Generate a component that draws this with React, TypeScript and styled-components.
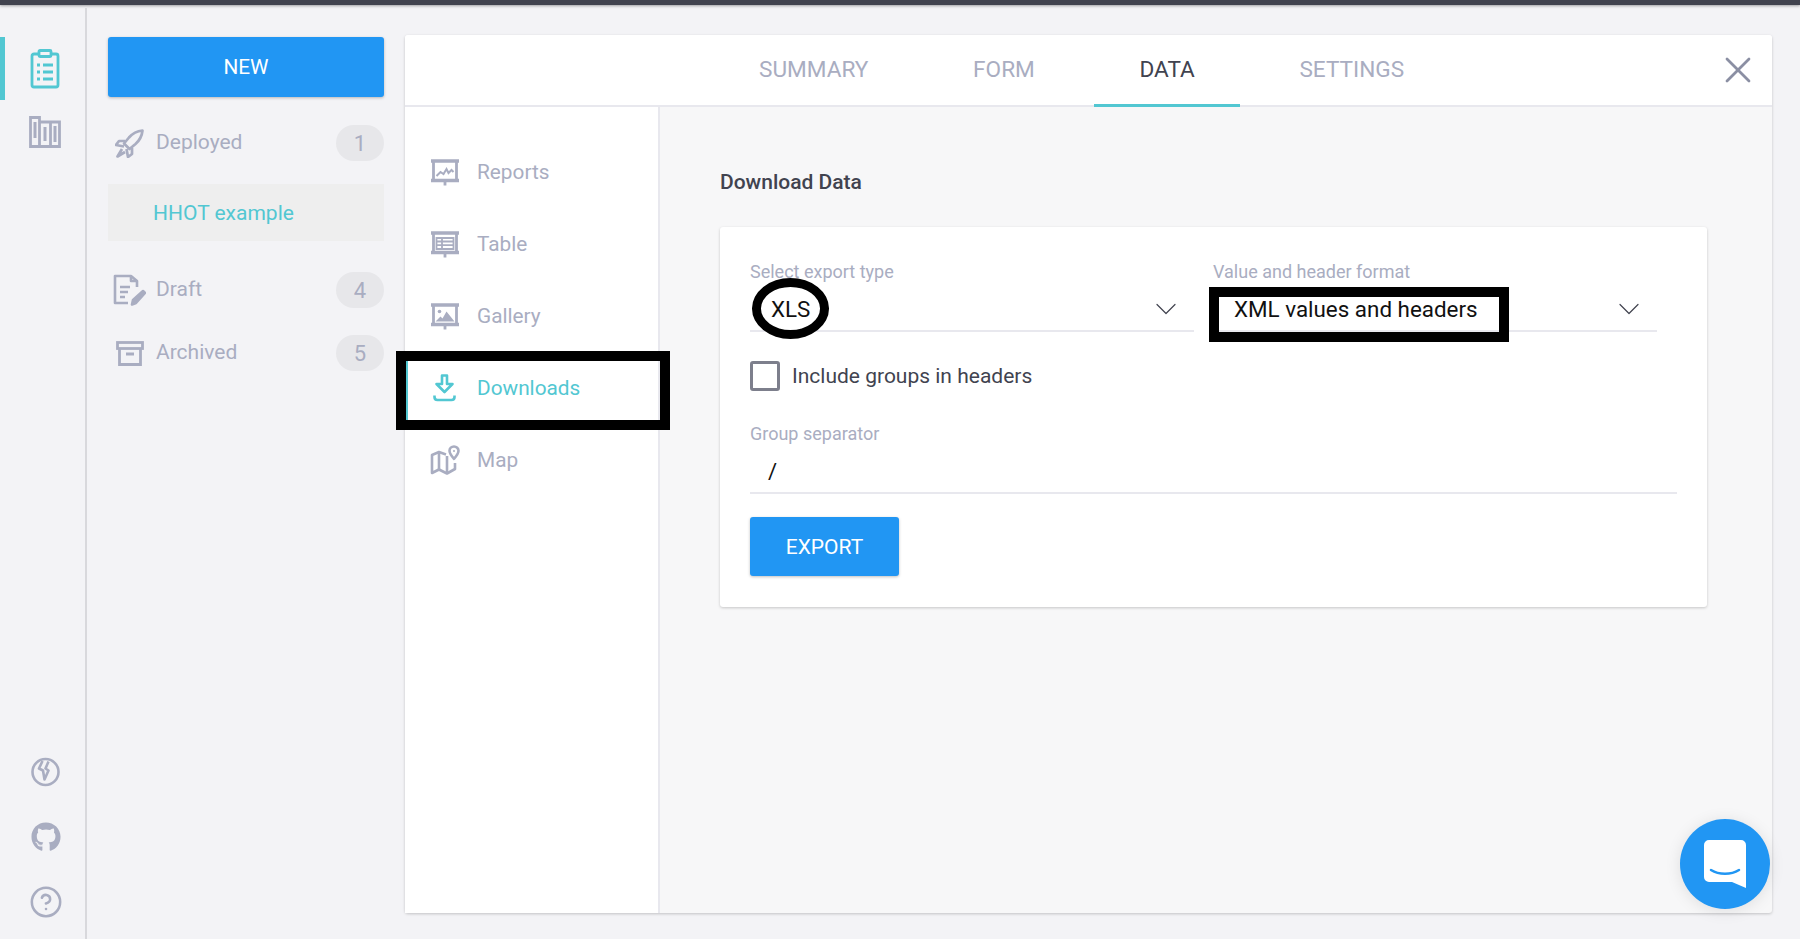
import React from 'react';
import styled, { createGlobalStyle } from 'styled-components';
import { FaGithub } from 'react-icons/fa';
import { ChevronDown, CircleHelp, X } from 'lucide-react';

const GREY = '#a9adc1';
const TEAL = '#52c7d2';
const BLUE = '#2196f3';

const GlobalStyle = createGlobalStyle`
  html, body { margin: 0; padding: 0; background: #f3f3f6; }
  * { box-sizing: border-box; }
  body { font-family: Roboto, "Liberation Sans", sans-serif; }
`;

const ClipboardIcon = () => (
  <svg width="30" height="40" viewBox="0 0 30 40" fill="none" stroke={TEAL} strokeWidth="2.8">
    <rect x="2" y="5" width="26" height="33" rx="2" />
    <rect x="9" y="1.5" width="12" height="6" rx="1" fill="#f3f3f6" />
    <path d="M7 16h3M13 16h10M7 23h3M13 23h10M7 30h3M13 30h10" strokeWidth="3" />
  </svg>
);

const ColumnsIcon = () => (
  <svg width="32" height="32" viewBox="0 0 32 32" fill="none" stroke={GREY} strokeWidth="2.8">
    <path d="M1.5 30.5V1.5h9v29zM10.5 30.5V6h11v24.500zM21.500 30.500V6h9v24.500z" />
    <path d="M6 6v16M16 11v14M26 10v16" strokeWidth="3" />
  </svg>
);

const BoltCircleIcon = () => (
  <svg width="29" height="34" viewBox="0 -2.500 29 34" fill="none" stroke={GREY} strokeWidth="2.6">
    <circle cx="14.500" cy="14.500" r="13" />
    <path d="M11.500 3.500 8 11l4 2 1.500 9 4-9-3-2 3-7" strokeLinejoin="round" />
  </svg>
);

const RocketIcon = () => (
  <svg width="29" height="29" viewBox="0 0 29 29" fill="none" stroke={GREY} strokeWidth="2.7" strokeLinejoin="round">
    <path d="M27.500 1.500c-5 .5-10 3-13.500 7l-5 6 5.500 5.500 6-5c4-3.500 6.500-8.500 7-13.500z" />
    <path d="M10 12H4L1 16l8 1.500M17 19v6l-4 3-1.500-8" />
    <path d="M7 20l-4.500 7.500L10 23" />
  </svg>
);

const DraftIcon = () => (
  <svg width="33" height="32" viewBox="0 0 33 32" fill="none" stroke={GREY} strokeWidth="2.6" strokeLinejoin="round">
    <path d="M24 13V7l-6-5H2v27h13" />
    <path d="M18 2v5h6" />
    <path d="M7 13h10M7 18h8M7 23h5" />
    <path d="M30 17l2 2-9 10-4 1.500 1-4.500z" fill={GREY} />
  </svg>
);

const ArchiveIcon = () => (
  <svg width="28" height="25" viewBox="0 0 28 25" fill="none" stroke={GREY} strokeWidth="2.8">
    <rect x="1.500" y="1.500" width="25" height="6" />
    <path d="M3.500 7.500v16h21v-16" />
    <path d="M10 13h8" strokeWidth="3" />
  </svg>
);

const BoardIcon = ({ children }: { children: React.ReactNode }) => (
  <svg width="28" height="27" viewBox="0 0 28 27" fill="none" stroke={GREY} strokeWidth="2.800">
    <path d="M0 2h28M0 21.500h28" strokeWidth="3.600" />
    <path d="M2.500 2v19.500M25.500 2v19.500M14 22v4.500" />
    {children}
  </svg>
);

const ReportsIcon = () => (
  <BoardIcon>
    <path d="M5.500 17l4-4 3 2 3-5 2 4 3-3 2 2" strokeWidth="2" />
  </BoardIcon>
);

const TableIcon = () => (
  <BoardIcon>
    <path d="M5.500 7h17v11h-17zM5.500 10.500h17M5.500 14.200h17M11 7v11" strokeWidth="1.800" />
  </BoardIcon>
);

const GalleryIcon = () => (
  <BoardIcon>
    <circle cx="8.500" cy="8.500" r="1.800" fill={GREY} stroke="none" />
    <path d="M4.500 18.500l5-5 2 2 4-7 8 10z" fill={GREY} stroke="none" />
  </BoardIcon>
);

const DownloadIcon = () => (
  <svg width="24" height="28" viewBox="0 0 24 28" fill="none" stroke={TEAL} strokeWidth="2.600">
    <path d="M9 1.500h5V10h5.500l-8 8-8-8H9z" strokeLinejoin="round" />
    <path d="M1.500 21.500v1.500c0 2 1 3 3 3h14c2 0 3-1 3-3v-1.500" />
  </svg>
);

const MapIcon = () => (
  <svg width="30" height="30" viewBox="0 0 30 30" fill="none" stroke={GREY} strokeWidth="2.600" strokeLinejoin="round">
    <path d="M16 9.500 9 7l-7 3v18l7-3.500 8 4 8-4.500v-6" />
    <path d="M9 7v17.500M17 11v17" />
    <path d="M24 1.500c-2.500 0-4.500 2-4.500 4.300 0 3 4.500 8 4.500 8s4.500-5 4.500-8c0-2.300-2-4.300-4.500-4.300z" />
    <circle cx="24" cy="6" r="1" fill={GREY} stroke="none" />
  </svg>
);

const ChatIcon = () => (
  <svg width="42" height="48" viewBox="0 0 42 48" fill="none">
    <path d="M5 0h32a5 5 0 0 1 5 5v43l-14-6H5a5 5 0 0 1-5-5V5a5 5 0 0 1 5-5z" fill="#fff" />
    <path d="M7 30c8 5 20 5 28 0" stroke={BLUE} strokeWidth="2.500" strokeLinecap="round" />
  </svg>
);

const sideItems = [
  { label: 'Deployed', count: 1, icon: <RocketIcon /> },
  { label: 'Draft', count: 4, icon: <DraftIcon /> },
  { label: 'Archived', count: 5, icon: <ArchiveIcon /> },
];

const subItems = [
  { label: 'Reports', icon: <ReportsIcon /> },
  { label: 'Table', icon: <TableIcon /> },
  { label: 'Gallery', icon: <GalleryIcon /> },
  { label: 'Downloads', icon: <DownloadIcon />, active: true },
  { label: 'Map', icon: <MapIcon /> },
];

const tabs = ['SUMMARY', 'FORM', 'DATA', 'SETTINGS'];

export default function App() {
  return (
    <Page>
      <GlobalStyle />
      <TopBar />
      <Body>
        <Rail>
          <RailGroup>
            <RailItem $active>
              <ClipboardIcon />
            </RailItem>
            <RailItem>
              <ColumnsIcon />
            </RailItem>
          </RailGroup>
          <RailFooter>
            <BoltCircleIcon />
            <FaGithub size={30} color={GREY} />
            <CircleHelp size={34} color={GREY} strokeWidth={1.800} />
          </RailFooter>
        </Rail>

        <Sidebar>
          <NewButton>NEW</NewButton>
          <SideRow>
            <SideIcon>{sideItems[0].icon}</SideIcon>
            <SideLabel>{sideItems[0].label}</SideLabel>
            <Badge>{sideItems[0].count}</Badge>
          </SideRow>
          <SelectedForm>HHOT example</SelectedForm>
          {sideItems.slice(1).map((item) => (
            <SideRow key={item.label} $tight>
              <SideIcon>{item.icon}</SideIcon>
              <SideLabel>{item.label}</SideLabel>
              <Badge>{item.count}</Badge>
            </SideRow>
          ))}
        </Sidebar>

        <Card>
          <TabBar>
            {tabs.map((tab) => (
              <Tab key={tab} $active={tab === 'DATA'}>
                {tab}
              </Tab>
            ))}
            <CloseButton>
              <X size={44} color="#8b8fa3" strokeWidth={1.500} />
            </CloseButton>
          </TabBar>
          <CardBody>
            <SubNav>
              {subItems.map((item) => (
                <SubRow key={item.label} $active={item.active}>
                  <SubIcon>{item.icon}</SubIcon>
                  {item.label}
                  {item.active && <RowMark />}
                </SubRow>
              ))}
            </SubNav>
            <Content>
              <Title>Download Data</Title>
              <Panel>
                <SelectRow>
                  <Field>
                    <FieldLabel>Select export type</FieldLabel>
                    <SelectValue>
                      <ValueText>
                        XLS
                        <EllipseMark />
                      </ValueText>
                      <Caret>
                        <ChevronDown size={36} color="#41434f" strokeWidth={0.800} />
                      </Caret>
                    </SelectValue>
                  </Field>
                  <Field>
                    <FieldLabel>Value and header format</FieldLabel>
                    <SelectValue>
                      <ValueText>
                        XML values and headers
                        <BoxMark />
                      </ValueText>
                      <Caret>
                        <ChevronDown size={36} color="#41434f" strokeWidth={0.800} />
                      </Caret>
                    </SelectValue>
                  </Field>
                </SelectRow>
                <CheckRow>
                  <CheckBox />
                  Include groups in headers
                </CheckRow>
                <FieldLabel>Group separator</FieldLabel>
                <SeparatorValue>/</SeparatorValue>
                <ExportButton>EXPORT</ExportButton>
              </Panel>
            </Content>
          </CardBody>
        </Card>
      </Body>
      <ChatBubble>
        <ChatIcon />
      </ChatBubble>
    </Page>
  );
}

const Page = styled.div`
  position: relative;
  width: 1800px;
  height: 939px;
  overflow: hidden;
  display: flex;
  flex-direction: column;
  background: #f3f3f6;
`;

const TopBar = styled.div`
  height: 5px;
  flex: none;
  background: #41434f;
  box-shadow: 0 1px 3px rgba(0, 0, 0, 0.35);
`;

const Body = styled.div`
  flex: 1;
  display: flex;
  min-height: 0;
`;

const Rail = styled.nav`
  width: 87px;
  flex: none;
  margin-top: 3px;
  padding: 29px 0 20px;
  border-right: 2px solid #d8d8dc;
  display: flex;
  flex-direction: column;
  justify-content: space-between;
`;

const RailGroup = styled.div`
  display: flex;
  flex-direction: column;
`;

const RailItem = styled.div<{ $active?: boolean }>`
  height: 63px;
  display: flex;
  align-items: center;
  justify-content: center;
  border-left: 5px solid ${(p) => (p.$active ? TEAL : 'transparent')};
`;

const RailFooter = styled.div`
  display: flex;
  flex-direction: column;
  align-items: center;
  gap: 33px;
  padding-left: 6px;
`;

const Sidebar = styled.aside`
  width: 276px;
  flex: none;
  margin-left: 21px;
  padding-top: 32px;
`;

const NewButton = styled.button`
  display: block;
  width: 100%;
  height: 60px;
  border: none;
  border-radius: 3px;
  background: ${BLUE};
  color: #fff;
  font: 400 20.800px Roboto, sans-serif;
  box-shadow: 0 1px 3px rgba(0, 0, 0, 0.25);
`;

const SideRow = styled.div<{ $tight?: boolean }>`
  height: 36px;
  margin-top: ${(p) => (p.$tight ? '27px' : '28px')};
  margin-bottom: ${(p) => (p.$tight ? '26px' : '23px')};
  display: flex;
  align-items: center;
  color: ${GREY};
  font-size: 21px;
`;

const SideIcon = styled.span`
  width: 48px;
  flex: none;
  display: flex;
  justify-content: center;
  padding-right: 5px;
`;

const SideLabel = styled.span`
  flex: 1;
  padding-bottom: 2px;
`;

const Badge = styled.span`
  width: 48px;
  height: 36px;
  border-radius: 18px;
  background: #e7e7ea;
  color: ${GREY};
  font-size: 22px;
  display: flex;
  align-items: center;
  justify-content: center;
`;

const SelectedForm = styled.div`
  height: 57px;
  margin-bottom: 31px;
  padding-left: 45px;
  display: flex;
  align-items: center;
  background: #eeeeee;
  color: ${TEAL};
  font-size: 21px;
`;

const Card = styled.main`
  width: 1367px;
  height: 878px;
  flex: none;
  margin: 30px 0 0 21px;
  border-radius: 3px;
  background: #f7f7f8;
  box-shadow: 0 1px 3px rgba(0, 0, 0, 0.2);
  display: flex;
  flex-direction: column;
`;

const TabBar = styled.div`
  height: 72px;
  flex: none;
  padding-left: 309px;
  display: flex;
  gap: 14.700px;
  border-radius: 3px 3px 0 0;
  background: #fff;
  border-bottom: 2px solid #e8e8ee;
`;

const Tab = styled.div<{ $active?: boolean }>`
  height: 72px;
  padding: 0 45px;
  display: flex;
  align-items: center;
  font-size: 22.600px;
  color: ${(p) => (p.$active ? '#41434f' : GREY)};
  border-bottom: 3px solid ${(p) => (p.$active ? TEAL : 'transparent')};
`;

const CloseButton = styled.div`
  margin-left: auto;
  padding-right: 12px;
  display: flex;
  align-items: center;
`;

const CardBody = styled.div`
  flex: 1;
  display: flex;
  min-height: 0;
`;

const SubNav = styled.div`
  width: 255px;
  flex: none;
  padding-top: 29px;
  background: #fff;
  border-right: 2px solid #e8e8ee;
`;

const SubRow = styled.div<{ $active?: boolean }>`
  position: relative;
  height: 72px;
  display: flex;
  align-items: center;
  font-size: 20.800px;
  color: ${(p) => (p.$active ? TEAL : GREY)};
`;

const SubIcon = styled.span`
  width: 72px;
  flex: none;
  display: flex;
  justify-content: center;
  padding-left: 7px;
`;

const RowMark = styled.span`
  position: absolute;
  top: -1px;
  bottom: -6px;
  left: -9px;
  right: -12px;
  border: 10px solid #000;
  box-shadow: inset 2px 0 0 ${TEAL};
`;

const Content = styled.div`
  flex: 1;
  padding: 61px 0 0 60px;
`;

const Title = styled.h2`
  margin: 0 0 31px;
  font-size: 21px;
  line-height: 28px;
  font-weight: 500;
  color: #41434f;
`;

const Panel = styled.section`
  width: 987px;
  height: 380px;
  padding: 35px 30px 0;
  border-radius: 3px;
  background: #fff;
  box-shadow: 0 1px 3px rgba(0, 0, 0, 0.2);
`;

const SelectRow = styled.div`
  display: flex;
  gap: 19px;
`;

const Field = styled.div`
  width: 444px;
`;

const FieldLabel = styled.div`
  font-size: 18px;
  line-height: 20px;
  color: ${GREY};
`;

const SelectValue = styled.div`
  height: 50px;
  display: flex;
  align-items: center;
  justify-content: space-between;
  padding: 5px 10px 0 21px;
  border-bottom: 2px solid #e8e8ee;
  color: #111;
  font-size: 22.400px;
`;

const Caret = styled.span`
  display: flex;
`;

const ValueText = styled.span`
  position: relative;
`;

const EllipseMark = styled.span`
  position: absolute;
  top: -18px;
  bottom: -17px;
  left: -19px;
  right: -19px;
  border: 9px solid #000;
  border-radius: 50%;
`;

const BoxMark = styled.span`
  position: absolute;
  top: -9px;
  bottom: -20px;
  left: -25px;
  right: -31px;
  border: 10px solid #000;
`;

const CheckRow = styled.label`
  margin: 29px 0 33px;
  display: flex;
  align-items: center;
  gap: 12px;
  font-size: 21px;
  color: #41434f;
`;

const CheckBox = styled.span`
  width: 30px;
  height: 30px;
  border: 3px solid #7d7f8c;
  border-radius: 3px;
  background: #fff;
`;

const SeparatorValue = styled.div`
  height: 50px;
  padding: 6px 0 0 18px;
  display: flex;
  align-items: center;
  border-bottom: 2px solid #e8e8ee;
  color: #111;
  font-size: 22px;
`;

const ExportButton = styled.button`
  display: block;
  width: 149px;
  height: 59px;
  margin-top: 23px;
  border: none;
  border-radius: 3px;
  background: ${BLUE};
  color: #fff;
  font: 400 21px Roboto, sans-serif;
  box-shadow: 0 1px 3px rgba(0, 0, 0, 0.25);
`;

const ChatBubble = styled.div`
  position: absolute;
  left: 1680px;
  top: 819px;
  width: 90px;
  height: 90px;
  border-radius: 50%;
  background: ${BLUE};
  display: flex;
  align-items: center;
  justify-content: center;
  box-shadow: 0 2px 16px rgba(0, 0, 0, 0.1);
`;
